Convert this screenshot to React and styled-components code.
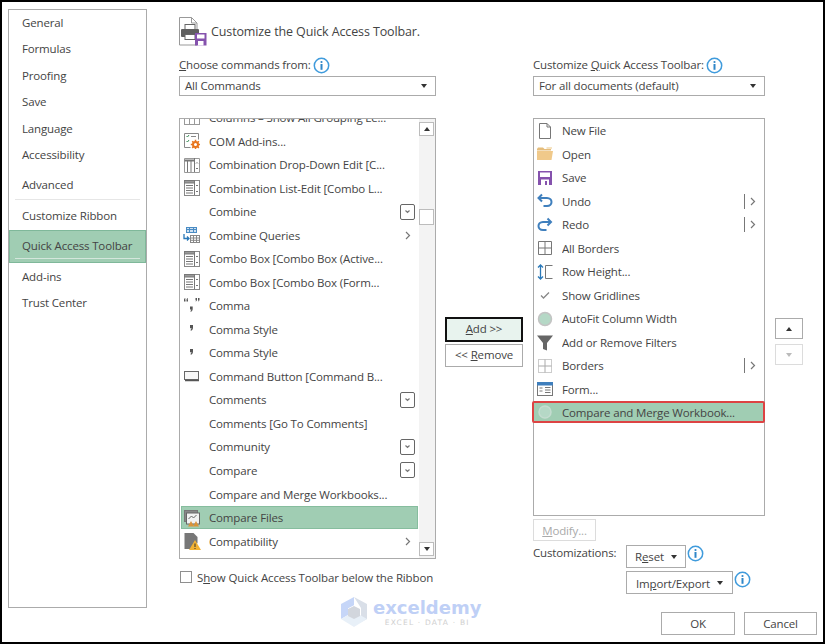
import React from "react";
import styled, { createGlobalStyle } from "styled-components";

const Global = createGlobalStyle`
  html, body { margin: 0; padding: 0; background: #fff; }
  * { box-sizing: border-box; }
`;

const Frame = styled.div`
  position: relative;
  width: 825px;
  height: 644px;
  border: 2px solid #000;
  background: #fff;
  padding: 7px 6px 0;
  font-family: "Open Sans", "Noto Sans", sans-serif;
  font-size: 11.5px;
  letter-spacing: -0.15px;
  color: #444;
  overflow: hidden;
`;
const TopRow = styled.div`
  display: flex;
  height: 599px;
`;
const Nav = styled.nav`
  width: 139px;
  flex: none;
  border: 1px solid #ababab;
  display: flex;
  flex-direction: column;
`;
const NavItem = styled.div`
  position: relative;
  height: ${(p) => (p.$active ? "33px" : "26.5px")};
  margin-top: ${(p) => p.$mt || 0}px;
  padding: 0 0 2px 13px;
  display: flex;
  align-items: center;
  background: ${(p) => (p.$active ? "#a0cdb3" : "transparent")};
  ${(p) => p.$active && `
    border: 1px solid #7fb89a;
    padding-left: 12px;
    &::after {
      content: "";
      position: absolute;
      left: 5px;
      right: 5px;
      bottom: 3px;
      height: 1px;
      background: #d4e6dc;
    }
  `}
`;
const NavRule = styled.div`
  height: 1px;
  margin: 0 6px 4px;
  background: #e6e6e6;
`;
const Content = styled.main`
  flex: 1;
  padding: 8px 0 0 32px;
  min-width: 0;
`;
const Header = styled.header`
  height: 30px;
  margin-bottom: 10px;
  display: flex;
  align-items: center;
  gap: 4px;
  font-size: 12.5px;
  letter-spacing: -0.12px;
  padding-bottom: 2px;
`;
const Columns = styled.div`
  display: grid;
  grid-template-columns: 257px 78px 233px 29px;
  column-gap: 9px;
`;
const Col = styled.section`
  display: flex;
  flex-direction: column;
  padding-top: ${(p) => p.$top || 0}px;
  margin-left: ${(p) => p.$ml || 0}px;
`;
const LabelRow = styled.div`
  height: 16px;
  display: flex;
  align-items: center;
  gap: 2px;
  margin-bottom: 3px;
`;
const LabelText = styled.span`
  position: relative;
  top: -1px;
`;
const InfoSvg = styled.svg`
  width: 17px;
  height: 17px;
  flex: none;
`;
const Info = () => (
  <InfoSvg viewBox="0 0 17 17">
    <circle cx="8.5" cy="8.5" r="7.2" fill="#fff" stroke="#3f9bdc" strokeWidth="1.5" />
    <circle cx="8.5" cy="5" r="1.1" fill="#2f86c8" />
    <rect x="7.5" y="7" width="2" height="5.8" fill="#2f86c8" />
  </InfoSvg>
);
const Select = styled.div`
  height: 20px;
  border: 1px solid #ababab;
  padding: 0 4px 2px 5px;
  display: flex;
  align-items: center;
  justify-content: space-between;
  margin-bottom: 22px;
`;
const SelectCaret = styled.span`
  margin: 2px 4px 0 0;
  display: flex;
`;
const Caret = styled.span`
  width: 0;
  height: 0;
  border-left: 3.5px solid transparent;
  border-right: 3.5px solid transparent;
  border-top: ${(p) => (p.$up ? 0 : 4)}px solid ${(p) => p.$c || "#333"};
  border-bottom: ${(p) => (p.$up ? 4 : 0)}px solid ${(p) => p.$c || "#333"};
`;
const ListBox = styled.div`
  height: ${(p) => p.$h}px;
  border: 1px solid #ababab;
  display: flex;
  overflow: ${(p) => (p.$clip ? "hidden" : "visible")};
`;
const ListItems = styled.div`
  flex: 1;
  min-width: 0;
  margin-top: ${(p) => p.$offset || 0}px;
  margin-left: ${(p) => p.$ml || 0}px;
`;
const Row = styled.div`
  height: 23.53px;
  display: flex;
  align-items: center;
  gap: 8px;
  margin: 0 1px;
  padding: 0 ${(p) => p.$right}px 0 2px;
  ${(p) => p.$sel && `background: #a0cdb3; box-shadow: inset 0 0 0 1px #86bd9e;`}
`;
const BoxedRow = styled(Row)`
  height: 22px;
  margin: 0;
  background: #a0cdb3;
  border: 2px solid #dd4343;
  border-radius: 2px;
  padding-left: 2px;
`;
const BoxedWrap = styled.div`
  margin: 0 -1px;
`;
const Label = styled.span`
  flex: 1;
  white-space: nowrap;
  overflow: hidden;
`;
const Slot = styled.span`
  width: 18px;
  height: 18px;
  flex: none;
  display: flex;
`;
const DropBox = styled.span`
  width: 15px;
  height: 16px;
  flex: none;
  border: 1px solid #666;
  border-radius: 2px;
  display: flex;
  align-items: center;
  justify-content: center;
`;
const ChevBox = styled.span`
  width: 15px;
  flex: none;
  display: flex;
  justify-content: center;
`;
const SplitBox = styled.span`
  width: 14px;
  height: 15px;
  flex: none;
  border-left: 1px solid #777;
  display: flex;
  align-items: center;
  justify-content: center;
  padding-left: 2px;
`;
const Scrollbar = styled.div`
  width: 16px;
  flex: none;
  background: #f3f3f3;
  padding: 3px 1px 2px 0;
  display: flex;
  flex-direction: column;
`;
const ScrollBtn = styled.div`
  width: 15px;
  height: 14px;
  background: #fff;
  border: 1px solid #bcbcbc;
  display: flex;
  align-items: center;
  justify-content: center;
  margin-top: ${(p) => (p.$auto ? "auto" : "0")};
`;
const Thumb = styled.div`
  width: 15px;
  height: 16px;
  background: #fff;
  border: 1px solid #bcbcbc;
  margin-top: 73px;
`;
const CheckRow = styled.label`
  display: flex;
  align-items: center;
  gap: 5px;
  margin: 10px 0 0 1px;
  height: 16px;
  white-space: nowrap;
`;
const CheckBox = styled.span`
  width: 12px;
  height: 12px;
  border: 1px solid #8f8f8f;
  background: #fff;
`;
const Button = styled.div`
  height: ${(p) => p.$h || 23}px;
  width: ${(p) => (p.$w ? p.$w + "px" : "auto")};
  border: 1px solid ${(p) => (p.$off ? "#dcdcdc" : "#ababab")};
  color: ${(p) => (p.$off ? "#aaa" : "#444")};
  background: #fff;
  display: flex;
  align-items: center;
  justify-content: center;
  gap: 7px;
  flex: none;
  padding-top: ${(p) => p.$pt || 0}px;
  padding-bottom: ${(p) => p.$pb || 0}px;
`;
const PrimaryButton = styled(Button)`
  border: 2px solid #111;
  background: #e8f3ee;
  height: 25px;
  margin-bottom: 2px;
`;
const ArrowButton = styled(Button)`
  height: 21px;
  margin-bottom: 5px;
`;
const ModifyButton = styled(Button)`
  margin-top: 3px;
`;
const Custom = styled.div`
  display: grid;
  grid-template-columns: 93px auto;
  margin-top: 4px;
`;
const CustomLabel = styled.span`
  line-height: 16px;
`;
const CustomStack = styled.div`
  display: flex;
  flex-direction: column;
  gap: 3px;
`;
const CustomLine = styled.div`
  display: flex;
  gap: 1px;
  align-items: flex-start;
`;
const Footer = styled.footer`
  display: flex;
  justify-content: flex-end;
  gap: 9px;
  margin-top: 4px;
`;
const Watermark = styled.div`
  position: absolute;
  left: 338px;
  top: 594px;
  display: flex;
  gap: 5px;
  align-items: flex-start;
`;
const WmText = styled.div`
  display: flex;
  flex-direction: column;
  align-items: center;
  padding-top: 1px;
  letter-spacing: 0;
`;
const WmName = styled.span`
  font-family: "DejaVu Sans", sans-serif;
  font-weight: 700;
  font-size: 18px;
  line-height: 22px;
  color: #bfd0f6;
`;
const WmSub = styled.span`
  font-family: "DejaVu Sans", sans-serif;
  font-size: 7.5px;
  line-height: 8px;
  letter-spacing: 1.2px;
  color: #cfcfcf;
  white-space: nowrap;
`;
const Svg = styled.svg`
  width: 18px;
  height: 18px;
  display: block;
`;
const HeaderSvg = styled.svg`
  width: 28px;
  height: 30px;
  flex: none;
`;
const LogoSvg = styled.svg`
  width: 28px;
  height: 32px;
  flex: none;
`;

const icons = {
  columns: <g fill="none" stroke="#999"><rect x="1.5" y="2.5" width="15" height="13" /><path d="M1.5 6h15M6.5 6v9M11.5 6v9" /></g>,
  addin: (
    <g fill="none">
      <path d="M1.5 15.5v-14h14v6M1.5 15.5h6" stroke="#888" />
      <path d="M3.5 4l1 1 1.500-2M3.5 9l1 1 1.500-2" stroke="#3f8f5b" />
      <path d="M8 4.500h5" stroke="#888" />
      <circle cx="12.500" cy="12.500" r="2.500" stroke="#e8761e" strokeWidth="2" />
      <path d="M12.500 7.800v2M12.500 15v2M7.800 12.500h2M15 12.500h2M9.200 9.200l1.300 1.300M14.600 14.600l1.300 1.300M15.900 9.200l-1.300 1.300M9.200 15.900l1.300-1.300" stroke="#e8761e" strokeWidth="1.500" />
    </g>
  ),
  combo1: (
    <g fill="none" stroke="#777">
      <path d="M1.500 2.500h15v14h-15z" stroke="#999" />
      <path d="M1.500 4.500h10" strokeWidth="2" />
      <path d="M4.500 5v11M8 5v11M11.500 2v14" />
      <path d="M13 7.500l1-1 1 1M13 12l1 1 1-1" />
    </g>
  ),
  combo: (
    <g fill="none" stroke="#777">
      <rect x="1.500" y="1.500" width="15" height="15" stroke="#888" />
      <rect x="1.500" y="1.500" width="10" height="2.500" fill="#999" />
      <path d="M11.500 2v14M3 6.500h7M3 9h7M3 11.500h7M3 14h7" />
      <path d="M13 7l1-1 1 1M13 12l1 1 1-1" />
    </g>
  ),
  queries: (
    <g fill="none">
      <rect x="3.500" y="1.500" width="10" height="5" fill="#cfe1f2" stroke="#4a8cc4" />
      <path d="M3.500 3.500h10M6.500 1.500v5M10.500 1.500v5" stroke="#4a8cc4" />
      <rect x="7.500" y="9.500" width="9" height="7" fill="#fff" stroke="#888" />
      <path d="M7.500 12h9M7.500 14.300h9M10.500 9.500v7M13.500 9.500v7" stroke="#888" />
      <path d="M1 8v4.500h5M4 10.500l2 2-2 2" stroke="#2a78b8" strokeWidth="1.300" />
    </g>
  ),
  quotes: (
    <g fill="#555">
      <path d="M1 4.500V3c0-1 .5-1.700 1.300-2v1c-.2.1-.3.300-.3.500h.5v2zM3.500 4.500V3c0-1 .5-1.700 1.300-2v1c-.2.1-.3.300-.3.500h.5v2z" />
      <path d="M12.500 1h1.500v1.500c0 1-.5 1.700-1.300 2v-1c.2-.1.3-.3.3-.5h-.5zM15 1h1.500v1.500c0 1-.5 1.700-1.300 2v-1c.2-.1.3-.3.3-.5H15z" />
      <path d="M7 9.500h2.700v2.200c0 1.700-.8 2.700-2.100 3.200v-1.100c.5-.3.700-.7.700-1.200H7z" />
    </g>
  ),
  comma: <path d="M7 5h3v2.400c0 1.800-.9 2.900-2.300 3.400V9.600c.5-.3.800-.8.800-1.300H7z" fill="#555" />,
  cmdbtn: <g fill="none"><rect x="1.500" y="4.500" width="14" height="8" stroke="#666" fill="#f6f6f6" /><path d="M2 13.500h14" stroke="#555" strokeWidth="1.500" /></g>,
  compareFiles: (
    <g fill="none">
      <rect x="1.500" y="1.500" width="13" height="11" fill="#888" stroke="#777" />
      <rect x="3.500" y="4" width="13" height="11" fill="#f2f2f2" stroke="#666" />
      <path d="M5.500 10l3-3 2 2 3-3" stroke="#666" />
      <path d="M5 17.500l3-5.500 3 5.500zM10 17.500l3-5.500 3 5.500z" fill="#d9933a" />
    </g>
  ),
  compat: (
    <g>
      <path d="M1.500 1h9l4 4v6l-5 6H1.500z" fill="#777" />
      <path d="M12 8l6 10H6z" fill="#f2b233" />
      <rect x="11.500" y="11.500" width="1" height="3.500" fill="#333" />
      <rect x="11.500" y="16" width="1" height="1" fill="#333" />
    </g>
  ),
  clipped: <rect x="2.500" y="4.500" width="13" height="12" fill="#fff" stroke="#888" rx="1" />,
  newfile: <path d="M3.500 1.500h7.500l3.500 3.500v11.500h-11zM11 1.500V5h3.500" fill="#fff" stroke="#777" />,
  open: (
    <g>
      <path d="M1 4l1-1.500h5L8.500 4H15v1.500H1z" fill="#e5bd7c" />
      <path d="M10.500 2H16v2h-5.500z" fill="#f5e3c3" />
      <path d="M1 6h16l-1.500 9H1z" fill="#f0c98a" />
    </g>
  ),
  save: (
    <g>
      <rect x="2" y="2" width="14" height="14" fill="#8552ad" />
      <rect x="4" y="3.500" width="10" height="4.500" fill="#fff" />
      <rect x="5" y="10.500" width="8" height="5.500" fill="#fff" />
      <rect x="9" y="12" width="2" height="4" fill="#8552ad" />
    </g>
  ),
  undo: <path d="M6 2.500L2.500 6 6 9.500M3 6h8c3 0 4.500 2 4.500 4s-1.500 4-4.500 4H7.500" fill="none" stroke="#3f7fbd" strokeWidth="2" />,
  redo: <path d="M11.500 2.500L15 6l-3.500 3.500M15 6H7c-3 0-4.500 2-4.500 4s1.500 4 4.500 4h3.500" fill="none" stroke="#3f7fbd" strokeWidth="2" />,
  borders: <path d="M2.500 2.500h13v13h-13zM9 2.500v13M2.500 9h13" fill="none" stroke="#777" />,
  rowheight: (
    <g fill="none">
      <path d="M4.500 2v14M2 4.500L4.500 2 7 4.500M2 13.500L4.500 16 7 13.500" stroke="#2a78b8" strokeWidth="1.300" />
      <path d="M16.500 2.500H9.500v13h7" stroke="#777" />
    </g>
  ),
  check: <path d="M5 9.500l2.500 2.500L13 6.500" fill="none" stroke="#888" strokeWidth="1.300" />,
  circle: <circle cx="9" cy="9" r="6.500" fill="#b5d8c6" stroke="#c3c3c3" strokeWidth="1.500" />,
  circleSel: <circle cx="9" cy="9" r="6" fill="#b5d8c6" stroke="#c5dcd0" strokeWidth="1.500" />,
  filter: <path d="M1 2.500h16L11 10v7.500l-4-1.500v-6z" fill="#666" />,
  bordersDot: (
    <g fill="none">
      <rect x="2.500" y="2.500" width="13" height="13" stroke="#999" strokeDasharray="1 1" />
      <path d="M9 2.500v13M2.500 9h13" stroke="#aaa" />
    </g>
  ),
  form: (
    <g fill="none">
      <rect x="1.500" y="2.500" width="15" height="13" fill="#fff" stroke="#777" />
      <rect x="1.500" y="2.500" width="15" height="2.500" fill="#3f7fbd" stroke="#3f7fbd" />
      <path d="M3.500 8h3M3.500 11h3M9 7.500h5.500M9 10h5.500M9 12.500h5.500" stroke="#777" />
    </g>
  ),
};

const Icon = ({ name }) => (
  <Slot>{name && <Svg viewBox="0 0 18 18">{icons[name]}</Svg>}</Slot>
);

const Chevron = ({ down }) => (
  <svg width="9" height="9" viewBox="0 0 9 9">
    <path d={down ? "M2.500 3.500L4.500 5.500 6.500 3.500" : "M3 1l3.500 3.500L3 8"} fill="none" stroke="#777" strokeWidth="1.200" />
  </svg>
);

const Trailing = ({ kind }) => {
  if (kind === "drop") return <DropBox><Chevron down /></DropBox>;
  if (kind === "chev") return <ChevBox><Chevron /></ChevBox>;
  if (kind === "split") return <SplitBox><Chevron /></SplitBox>;
  return null;
};

const leftRows = [
  ["columns", "Columns – Show All Grouping Le..."],
  ["addin", "COM Add-ins..."],
  ["combo1", "Combination Drop-Down Edit [C..."],
  ["combo", "Combination List-Edit [Combo L..."],
  [null, "Combine", "drop"],
  ["queries", "Combine Queries", "chev"],
  ["combo", "Combo Box [Combo Box (Active..."],
  ["combo", "Combo Box [Combo Box (Form..."],
  ["quotes", "Comma"],
  ["comma", "Comma Style"],
  ["comma", "Comma Style"],
  ["cmdbtn", "Command Button [Command B..."],
  [null, "Comments", "drop"],
  [null, "Comments [Go To Comments]"],
  [null, "Community", "drop"],
  [null, "Compare", "drop"],
  [null, "Compare and Merge Workbooks..."],
  ["compareFiles", "Compare Files", null, true],
  ["compat", "Compatibility", "chev"],
  ["clipped", ""],
];

const rightRows = [
  ["newfile", "New File"],
  ["open", "Open"],
  ["save", "Save"],
  ["undo", "Undo", "split"],
  ["redo", "Redo", "split"],
  ["borders", "All Borders"],
  ["rowheight", "Row Height..."],
  ["check", "Show Gridlines"],
  ["circle", "AutoFit Column Width"],
  ["filter", "Add or Remove Filters"],
  ["bordersDot", "Borders", "split"],
  ["form", "Form..."],
];

const navTop = ["General", "Formulas", "Proofing", "Save", "Language", "Accessibility"];

export default function App() {
  return (
    <Frame>
      <Global />
      <TopRow>
        <Nav>
          {navTop.map((t) => <NavItem key={t}>{t}</NavItem>)}
          <NavItem $mt={3}>Advanced</NavItem>
          <NavRule />
          <NavItem>Customize Ribbon</NavItem>
          <NavItem $active>Quick Access Toolbar</NavItem>
          <NavItem $mt={1}>Add-ins</NavItem>
          <NavItem>Trust Center</NavItem>
        </Nav>
        <Content>
          <Header>
            <HeaderSvg viewBox="0 0 28 30">
              <path d="M0.500 1.500h12l5.500 5.500v22H0.500z" fill="#fff" stroke="#999" />
              <path d="M12.500 1.500V7H18" fill="none" stroke="#999" />
              <rect x="6" y="8.500" width="10" height="5" fill="#fff" stroke="#666" />
              <rect x="2" y="13" width="18" height="8" rx="1" fill="#5f5f5f" />
              <rect x="6" y="18.500" width="10" height="5" fill="#fff" stroke="#666" />
              <rect x="16" y="17" width="11.500" height="12.500" fill="#8552ad" />
              <rect x="18" y="18.500" width="7.500" height="4" fill="#fff" />
              <rect x="19" y="25" width="5.500" height="4.500" fill="#fff" />
            </HeaderSvg>
            Customize the Quick Access Toolbar.
          </Header>
          <Columns>
            <Col>
              <LabelRow><LabelText><u>C</u>hoose commands from:</LabelText><Info /></LabelRow>
              <Select>All Commands<SelectCaret><Caret /></SelectCaret></Select>
              <ListBox $h={441} $clip>
                <ListItems $offset={-13}>
                  {leftRows.map(([ic, t, tr, sel], i) => (
                    <Row key={i} $right={3} $sel={sel}>
                      <Icon name={ic} />
                      <Label>{t}</Label>
                      <Trailing kind={tr} />
                    </Row>
                  ))}
                </ListItems>
                <Scrollbar>
                  <ScrollBtn><Caret $up /></ScrollBtn>
                  <Thumb />
                  <ScrollBtn $auto><Caret /></ScrollBtn>
                </Scrollbar>
              </ListBox>
              <CheckRow>
                <CheckBox />
                <span>S<u>h</u>ow Quick Access Toolbar below the Ribbon</span>
              </CheckRow>
            </Col>
            <Col $top={260}>
              <PrimaryButton $pb={2}><span><u>A</u>dd &gt;&gt;</span></PrimaryButton>
              <Button $pb={2}><span>&lt;&lt; <u>R</u>emove</span></Button>
            </Col>
            <Col $ml={1}>
              <LabelRow><LabelText>Customize <u>Q</u>uick Access Toolbar:</LabelText><Info /></LabelRow>
              <Select>For all documents (default)<SelectCaret><Caret /></SelectCaret></Select>
              <ListBox $h={398}>
                <ListItems $offset={0} $ml={-1}>
                  {rightRows.map(([ic, t, tr]) => (
                    <Row key={t} $right={5}>
                      <Icon name={ic} />
                      <Label>{t}</Label>
                      <Trailing kind={tr} />
                    </Row>
                  ))}
                  <BoxedWrap>
                    <BoxedRow $right={5}>
                      <Icon name="circleSel" />
                      <Label>Compare and Merge Workbook...</Label>
                    </BoxedRow>
                  </BoxedWrap>
                </ListItems>
              </ListBox>
              <ModifyButton $off $w={63} $h={22}><span><u>M</u>odify...</span></ModifyButton>
              <Custom>
                <CustomLabel>Customizations:</CustomLabel>
                <CustomStack>
                  <CustomLine>
                    <Button $w={60}><span>R<u>e</u>set</span><Caret /></Button>
                    <Info />
                  </CustomLine>
                  <CustomLine>
                    <Button $w={107} $pt={1}><span>Im<u>p</u>ort/Export</span><Caret /></Button>
                    <Info />
                  </CustomLine>
                </CustomStack>
              </Custom>
            </Col>
            <Col $top={261} $ml={1}>
              <ArrowButton><Caret $up /></ArrowButton>
              <ArrowButton $off><Caret $c="#bbb" /></ArrowButton>
            </Col>
          </Columns>
        </Content>
      </TopRow>
      <Footer>
        <Button $w={74}>OK</Button>
        <Button $w={73}>Cancel</Button>
      </Footer>
      <Watermark>
        <LogoSvg viewBox="0 0 28 32">
          <path d="M14 1L1 8v8l13-7z" fill="#c6d6f8" />
          <path d="M14 1l13 7v15l-6 3V12z" fill="#d9dfe8" />
          <path d="M1 8v15l7-4v-7l6-3z" fill="#c6d6f8" />
          <path d="M1 23l13 8 13-8-7-4-6 3-6-3z" fill="#e8f0f8" />
          <path d="M8 13l6-3 6 3v7l-6 3-6-3z" fill="#d2d6dd" />
        </LogoSvg>
        <WmText>
          <WmName>exceldemy</WmName>
          <WmSub>EXCEL · DATA · BI</WmSub>
        </WmText>
      </Watermark>
    </Frame>
  );
}
